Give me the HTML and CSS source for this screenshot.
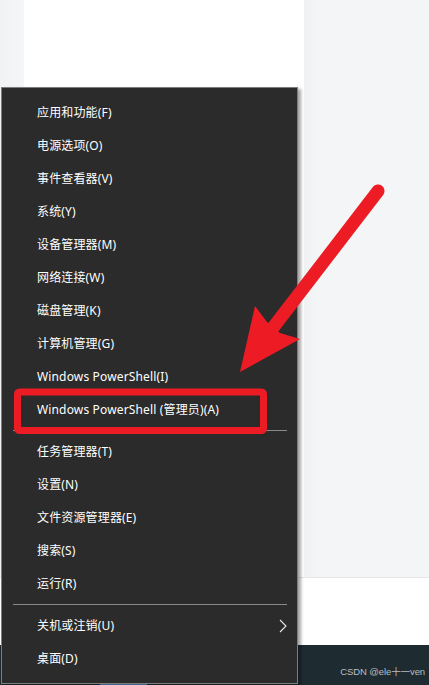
FILE: index.html
```html
<!DOCTYPE html>
<html lang="zh-CN">
<head>
    <meta charset="UTF-8">
    <meta name="viewport" content="width=device-width, initial-scale=1.0">
    <title>Win+X 菜单</title>
    <link rel="stylesheet" href="styles.css">
</head>
<body>

    <div class="desktop">
        <div class="top">
            <div class="gutter"></div>
            <div class="sheet"></div>
            <div class="side"></div>
        </div>
        <div class="blank"></div>
        <div class="taskbar">
            <div class="tb-app"></div>
            <span class="watermark">CSDN @ele十一ven</span>
        </div>
    </div>

    <!-- Win+X 菜单 -->
    <div class="winx-menu">
        <div class="item">应用和功能(F)</div>
        <div class="item">电源选项(O)</div>
        <div class="item">事件查看器(V)</div>
        <div class="item">系统(Y)</div>
        <div class="item">设备管理器(M)</div>
        <div class="item">网络连接(W)</div>
        <div class="item">磁盘管理(K)</div>
        <div class="item">计算机管理(G)</div>
        <div class="item">Windows PowerShell(I)</div>
        <div class="item">Windows PowerShell (管理员)(A)</div>
        <div class="sep"></div>
        <div class="item">任务管理器(T)</div>
        <div class="item">设置(N)</div>
        <div class="item">文件资源管理器(E)</div>
        <div class="item">搜索(S)</div>
        <div class="item">运行(R)</div>
        <div class="sep"></div>
        <div class="item has-sub">
            <span>关机或注销(U)</span>
            <svg class="chevron" width="8" height="14" viewBox="0 0 8 14">
                <path d="M1 1 L7 7 L1 13" fill="none" stroke="#e8e8e8" stroke-width="1.1"/>
            </svg>
        </div>
        <div class="item">桌面(D)</div>
    </div>

    <!-- 红色标注 -->
    <svg class="annotation" width="429" height="685" viewBox="0 0 429 685">
        <rect x="17.5" y="392" width="246" height="38.5" rx="2" fill="none" stroke="#ed1c24" stroke-width="7"/>
        <line x1="378" y1="191" x2="272" y2="329" stroke="#ed1c24" stroke-width="13" stroke-linecap="round"/>
        <polygon points="240,372 255,306 267,322 280,333 300,339" fill="#ed1c24"/>
    </svg>

</body>
</html>
```

FILE: styles.css
```css
body {
    margin: 0;
    width: 429px;
    height: 685px;
    overflow: hidden;
    position: relative;
    font-family: "Noto Sans", "Noto Sans CJK SC", sans-serif;
}

.desktop {
    display: flex;
    flex-direction: column;
    height: 685px;
}

.top {
    display: flex;
    height: 577px;
    border-bottom: 1px solid #e4e6e9;
}

.gutter {
    width: 24px;
    background: linear-gradient(to right, #f1f2f4, #f5f6f8);
}

.sheet {
    width: 280px;
    background: #fff;
}

.side {
    flex: 1;
    background: linear-gradient(to right, #f0f1f3, #f4f5f7 16px, #f4f5f7);
}

.blank {
    height: 67px;
    background: #fff;
}

.taskbar {
    flex: 1;
    display: flex;
    align-items: flex-end;
    justify-content: space-between;
    background: #1e2b31;
}

.tb-app {
    width: 47px;
    height: 3px;
    margin-left: 100px;
    background: #5b8fc2;
}

.watermark {
    font-family: "Liberation Sans", "Noto Sans CJK SC", sans-serif;
    font-size: 9.5px;
    letter-spacing: -0.1px;
    color: #b9bec1;
    margin: 0 4px 7px 0;
}

/* 菜单 */
.winx-menu {
    position: absolute;
    left: 1px;
    top: 87px;
    width: 295px;
    padding: 8px 0 8px;
    background: #2b2b2b;
    border: 1px solid #7d7d7d;
    box-shadow: 3px 2px 3px rgba(0, 0, 0, 0.35);
}

.item {
    height: 33px;
    line-height: 33px;
    padding-left: 35px;
    padding-right: 10px;
    font-size: 12px;
    letter-spacing: 0.15px;
    color: #fff;
    white-space: nowrap;
}

.has-sub {
    display: flex;
    justify-content: space-between;
    align-items: center;
}

.chevron {
    display: block;
}

.sep {
    height: 1px;
    margin: 4px 10px 4px 11px;
    background: #8a8a8a;
}

.annotation {
    position: absolute;
    left: 0;
    top: 0;
    pointer-events: none;
}
```
